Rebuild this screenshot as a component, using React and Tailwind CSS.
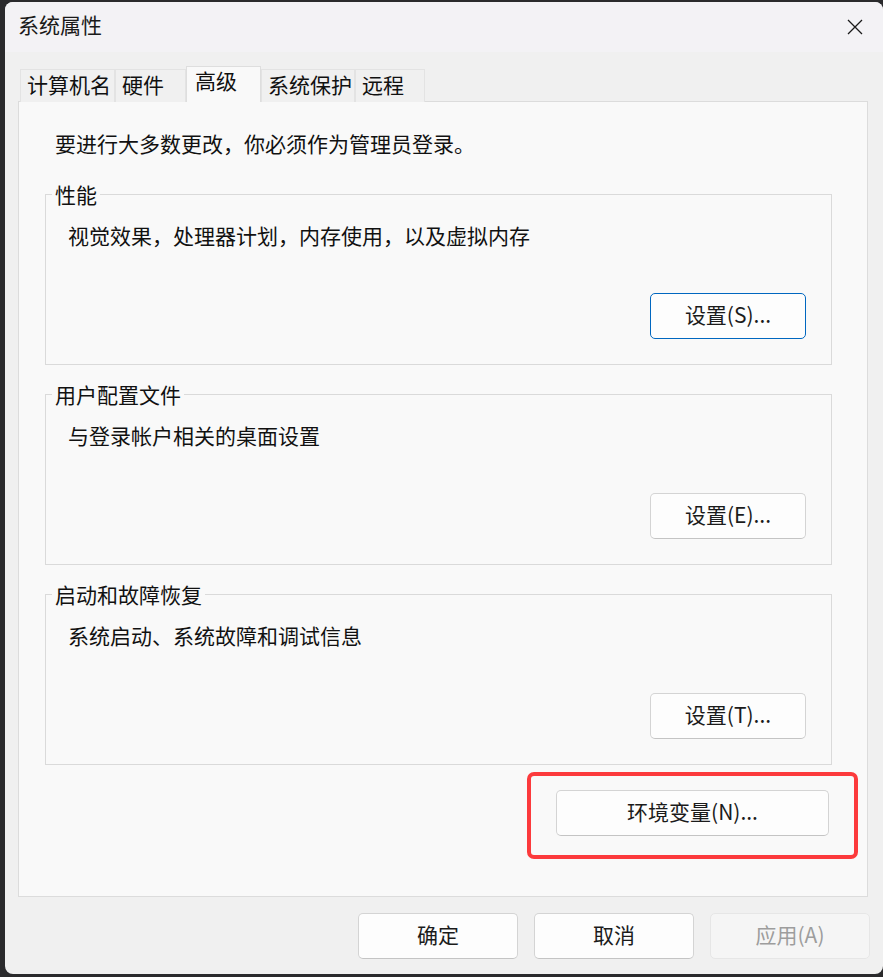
const tabs = [
  { label: "计算机名", w: 95 },
  { label: "硬件", w: 71 },
  { label: "高级", w: 75, active: true },
  { label: "系统保护", w: 94 },
  { label: "远程", w: 70 },
];

const groups = [
  { title: "性能", desc: "视觉效果，处理器计划，内存使用，以及虚拟内存", btn: "设置(S)...", focused: true },
  { title: "用户配置文件", desc: "与登录帐户相关的桌面设置", btn: "设置(E)..." },
  { title: "启动和故障恢复", desc: "系统启动、系统故障和调试信息", btn: "设置(T)..." },
];

function WinButton({ children, focused, disabled, className = "" }) {
  const tone = disabled
    ? "bg-[#f5f5f5] border-[#e6e6e6] text-[#9d9d9d]"
    : focused
    ? "bg-[#fdfdfd] border-[#0067c0] text-[#1b1b1b]"
    : "bg-[#fdfdfd] border-[#d4d4d4] border-b-[#c4c4c4] text-[#1b1b1b]";
  return (
    <button className={`h-[46px] rounded-[5px] border flex items-center justify-center pb-[3px] text-[21px] leading-none ${tone} ${className}`}>
      {children}
    </button>
  );
}

export default function App() {
  return (
    <div
      className="w-[883px] h-[977px] bg-[#2a2a2c] overflow-hidden pt-[2px] pl-[5px]"
      style={{ fontFamily: '"Noto Sans CJK SC", "Noto Sans", sans-serif' }}
    >
      <div className="w-[878px] h-[972px] rounded-[8px] overflow-hidden bg-[#f0f0f0] flex flex-col">
        {/* title bar */}
        <div className="h-[50px] bg-[#f3f2f5] flex items-center justify-between pl-[13px] pr-[20px] shrink-0">
          <span className="text-[21px] text-[#1a1a1a] leading-none pb-[6px]">系统属性</span>
          <svg width="16" height="16" viewBox="0 0 16 16" fill="none" stroke="#1a1a1a" strokeWidth="1.3">
            <path d="M1 1l14 14M15 1L1 15" />
          </svg>
        </div>

        {/* body */}
        <div className="flex-1 flex flex-col pt-[16px] pl-[13px] pr-[15px] pb-[15px]">
          {/* tabs */}
          <div className="flex items-end h-[33px] ml-[2px] relative z-10">
            {tabs.map((t) =>
              t.active ? (
                <div
                  key={t.label}
                  className="h-[36px] -mb-[1px] bg-[#f9f9f9] border border-b-0 border-[#dedede] pl-[8px] text-[21px] leading-[27px] text-[#111]"
                  style={{ width: t.w }}
                >
                  {t.label}
                </div>
              ) : (
                <div
                  key={t.label}
                  className="h-[33px] -mb-[1px] bg-[#f0f0f0] border border-b-0 border-[#e3e3e3] pl-[6px] text-[21px] leading-[29px] text-[#111]"
                  style={{ width: t.w }}
                >
                  {t.label}
                </div>
              )
            )}
          </div>

          {/* panel */}
          <div className="h-[796px] bg-[#f9f9f9] border border-[#dcdcdc] pl-[26px] pr-[35px] pt-[27px] flex flex-col">
            <p className="text-[21px] leading-[28px] text-[#111] ml-[10px]">要进行大多数更改，你必须作为管理员登录。</p>

            <div className="mt-[37px] flex flex-col gap-[29px]">
              {groups.map((g) => (
                <div key={g.title} className="h-[171px] border border-[#dadada] flex flex-col">
                  <div className="-mt-[15px] ml-[6px] px-[3px] w-fit bg-[#f9f9f9] text-[21px] leading-[28px] text-[#111]">
                    {g.title}
                  </div>
                  <p className="mt-[13px] ml-[22px] text-[21px] leading-[28px] text-[#111]">{g.desc}</p>
                  <WinButton focused={g.focused} className="mt-auto mb-[25px] mr-[25px] self-end w-[156px]">
                    {g.btn}
                  </WinButton>
                </div>
              ))}
            </div>

            <div className="mt-[25px] flex justify-end mr-[3px]">
              <div className="relative">
                <WinButton className="w-[273px]">环境变量(N)...</WinButton>
                <div className="absolute -left-[29px] -top-[18px] -right-[29px] -bottom-[23px] border-[4px] border-[#fc3a3c] rounded-[7px] pointer-events-none" />
              </div>
            </div>
          </div>

          {/* dialog buttons */}
          <div className="mt-[16px] flex justify-end gap-[16px] -mr-[2px]">
            <WinButton className="w-[160px]">确定</WinButton>
            <WinButton className="w-[160px]">取消</WinButton>
            <WinButton disabled className="w-[160px]">应用(A)</WinButton>
          </div>
        </div>
      </div>
    </div>
  );
}
